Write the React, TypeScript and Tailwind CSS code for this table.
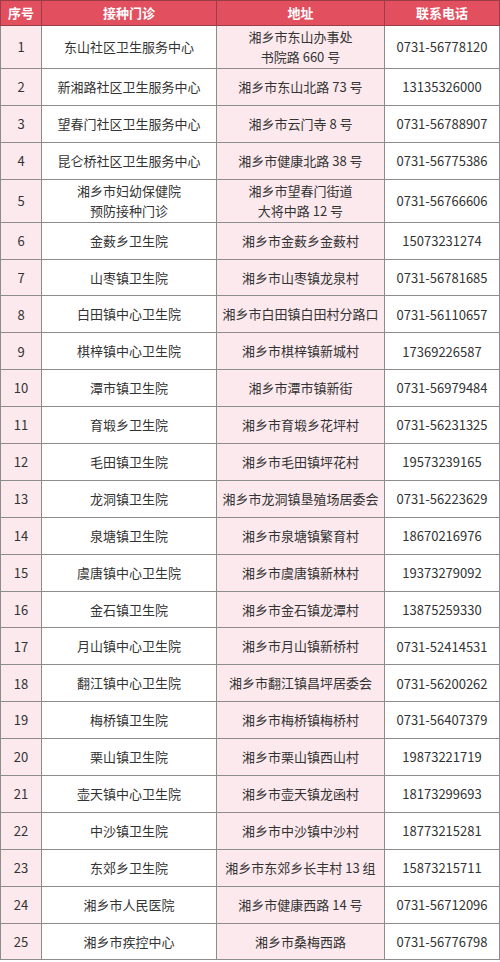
import React from "react";

interface Clinic {
  name: string[];
  address: string[];
  phone: string;
}

const clinics: Clinic[] = [
  { name: ["东山社区卫生服务中心"], address: ["湘乡市东山办事处", "书院路 660 号"], phone: "0731-56778120" },
  { name: ["新湘路社区卫生服务中心"], address: ["湘乡市东山北路 73 号"], phone: "13135326000" },
  { name: ["望春门社区卫生服务中心"], address: ["湘乡市云门寺 8 号"], phone: "0731-56788907" },
  { name: ["昆仑桥社区卫生服务中心"], address: ["湘乡市健康北路 38 号"], phone: "0731-56775386" },
  { name: ["湘乡市妇幼保健院", "预防接种门诊"], address: ["湘乡市望春门街道", "大将中路 12 号"], phone: "0731-56766606" },
  { name: ["金薮乡卫生院"], address: ["湘乡市金薮乡金薮村"], phone: "15073231274" },
  { name: ["山枣镇卫生院"], address: ["湘乡市山枣镇龙泉村"], phone: "0731-56781685" },
  { name: ["白田镇中心卫生院"], address: ["湘乡市白田镇白田村分路口"], phone: "0731-56110657" },
  { name: ["棋梓镇中心卫生院"], address: ["湘乡市棋梓镇新城村"], phone: "17369226587" },
  { name: ["潭市镇卫生院"], address: ["湘乡市潭市镇新街"], phone: "0731-56979484" },
  { name: ["育塅乡卫生院"], address: ["湘乡市育塅乡花坪村"], phone: "0731-56231325" },
  { name: ["毛田镇卫生院"], address: ["湘乡市毛田镇坪花村"], phone: "19573239165" },
  { name: ["龙洞镇卫生院"], address: ["湘乡市龙洞镇垦殖场居委会"], phone: "0731-56223629" },
  { name: ["泉塘镇卫生院"], address: ["湘乡市泉塘镇繁育村"], phone: "18670216976" },
  { name: ["虞唐镇中心卫生院"], address: ["湘乡市虞唐镇新林村"], phone: "19373279092" },
  { name: ["金石镇卫生院"], address: ["湘乡市金石镇龙潭村"], phone: "13875259330" },
  { name: ["月山镇中心卫生院"], address: ["湘乡市月山镇新桥村"], phone: "0731-52414531" },
  { name: ["翻江镇中心卫生院"], address: ["湘乡市翻江镇昌坪居委会"], phone: "0731-56200262" },
  { name: ["梅桥镇卫生院"], address: ["湘乡市梅桥镇梅桥村"], phone: "0731-56407379" },
  { name: ["栗山镇卫生院"], address: ["湘乡市栗山镇西山村"], phone: "19873221719" },
  { name: ["壶天镇中心卫生院"], address: ["湘乡市壶天镇龙函村"], phone: "18173299693" },
  { name: ["中沙镇卫生院"], address: ["湘乡市中沙镇中沙村"], phone: "18773215281" },
  { name: ["东郊乡卫生院"], address: ["湘乡市东郊乡长丰村 13 组"], phone: "15873215711" },
  { name: ["湘乡市人民医院"], address: ["湘乡市健康西路 14 号"], phone: "0731-56712096" },
  { name: ["湘乡市疾控中心"], address: ["湘乡市桑梅西路"], phone: "0731-56776798" },
];

const Lines: React.FC<{ lines: string[] }> = ({ lines }) => (
  <>
    {lines.map((l, i) => (
      <div key={i} className="leading-[20px]">
        {l}
      </div>
    ))}
  </>
);

export default function App() {
  return (
    <div
      className="w-[500px] h-[962px] bg-white overflow-hidden"
      style={{ fontFamily: '"Noto Sans CJK SC", "Noto Sans", sans-serif' }}
    >
      <table className="w-[499px] table-fixed border-collapse text-[13px] text-[#333]">
        <colgroup>
          <col className="w-[41px]" />
          <col className="w-[175px]" />
          <col className="w-[168px]" />
          <col className="w-[115px]" />
        </colgroup>
        <thead>
          <tr className="h-[25px] bg-[#e2505f] text-white font-bold text-[13px]">
            <th className="border border-[#9a3d47] p-0">序号</th>
            <th className="border border-[#9a3d47] p-0">接种门诊</th>
            <th className="border border-[#9a3d47] p-0">地址</th>
            <th className="border border-[#9a3d47] p-0">联系电话</th>
          </tr>
        </thead>
        <tbody>
          {clinics.map((c, i) => {
            const tall = c.name.length > 1 || c.address.length > 1;
            return (
              <tr key={i} className={tall ? "h-[43px]" : "h-[36.9px]"}>
                <td className="border border-[#8c8c8c] bg-[#fce9ed] text-center p-0">{i + 1}</td>
                <td className="border border-[#8c8c8c] bg-white text-center p-0">
                  <Lines lines={c.name} />
                </td>
                <td className="border border-[#8c8c8c] bg-[#fce9ed] text-center p-0">
                  <Lines lines={c.address} />
                </td>
                <td className="border border-[#8c8c8c] bg-white text-center p-0">{c.phone}</td>
              </tr>
            );
          })}
        </tbody>
      </table>
    </div>
  );
}
